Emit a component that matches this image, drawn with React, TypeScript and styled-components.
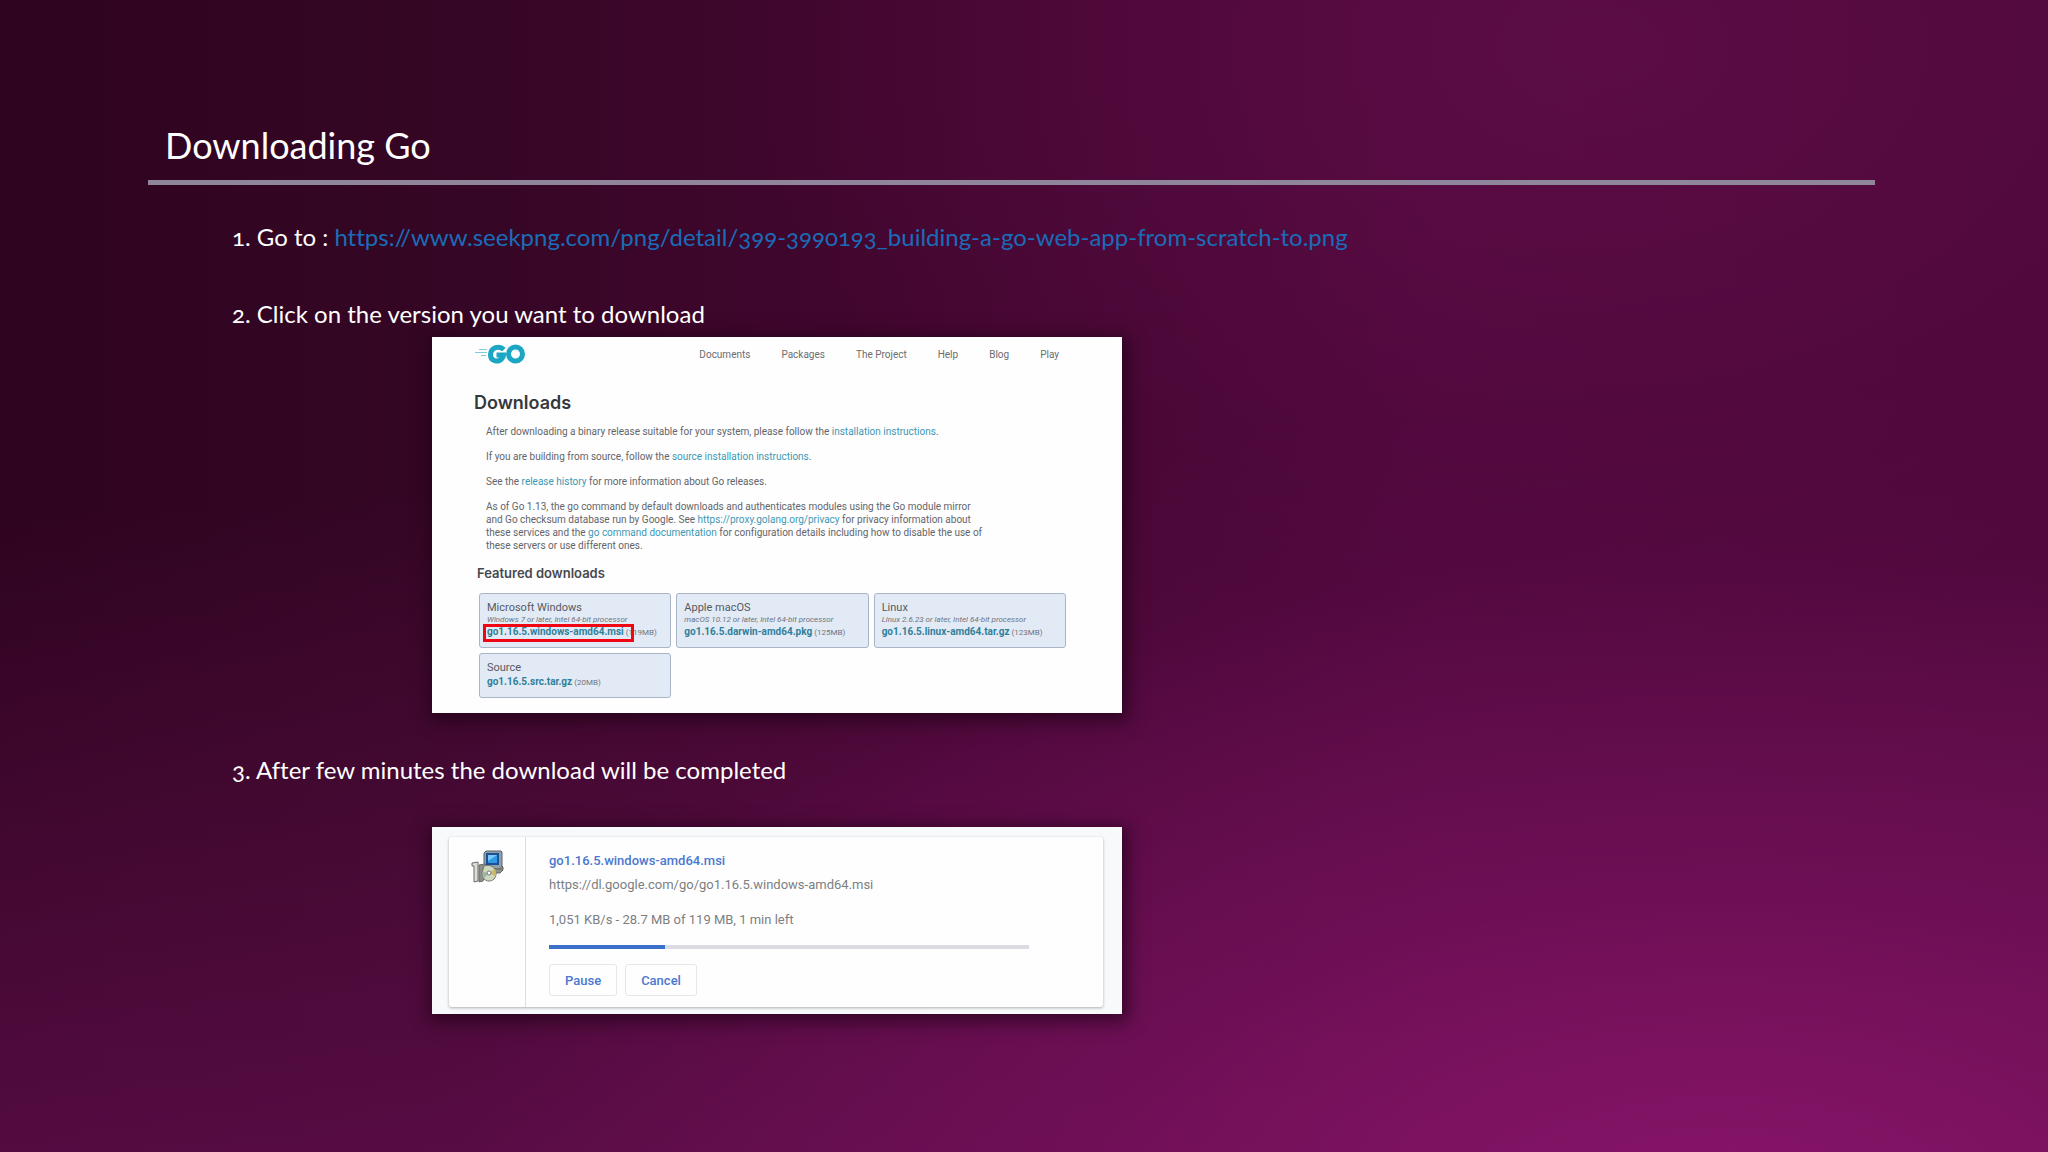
import React from "react";
import styled, { createGlobalStyle } from "styled-components";

const sans = `Lato, "Open Sans", sans-serif`;
const ui = `Roboto, "Liberation Sans", sans-serif`;

const GlobalStyle = createGlobalStyle`
  *, *::before, *::after { box-sizing: border-box; }
  body { margin: 0; background: #3c062b; }
`;

const Slide = styled.main`
  min-height: 100vh;
  padding: 120px 173px 60px 148px;
  font-family: ${sans};
  font-variant-numeric: oldstyle-nums;
  font-variant-ligatures: none;
  color: #fff;
  background:
    radial-gradient(ellipse 62% 58% at 84% 106%, rgba(146, 22, 112, 0.8) 0%, rgba(136, 20, 106, 0.4) 50%, rgba(130, 18, 100, 0) 100%),
    radial-gradient(ellipse 42% 50% at 78% 4%, rgba(104, 16, 78, 0.5) 0%, rgba(96, 12, 72, 0) 100%),
    linear-gradient(176deg, rgba(100, 14, 80, 0) 40%, rgba(108, 16, 86, 0.72) 100%),
    linear-gradient(90deg, #2f0420 0%, #340624 20%, #430630 45%, #4e083b 70%, #4c0838 100%);
`;

const Title = styled.h1`
  margin: 0;
  padding: 0 17px 10px;
  font-size: 36px;
  font-weight: 400;
  line-height: 50px;
  border-bottom: 5px solid #8f869b;
`;

const Steps = styled.ol`
  list-style: none;
  margin: 0;
  padding: 36px 0 0 84px;
`;

const Step = styled.li<{ $gap: number }>`
  margin-bottom: ${(p) => p.$gap}px;
`;

const StepText = styled.p`
  margin: 0;
  font-size: 24px;
  line-height: 32px;
`;

const StepLink = styled.a`
  color: #1a6cb8;
  text-decoration: none;
`;

const Shot = styled.section<{ $top: number }>`
  width: 690px;
  max-width: 100%;
  margin: ${(p) => p.$top}px 0 0 200px;
  font-family: ${ui};
  font-variant-numeric: normal;
  box-shadow: 2px 4px 16px 4px rgba(24, 0, 16, 0.6);
`;

const GoPage = styled(Shot)`
  padding: 5px 56px 15px 42px;
  background: #fefefe;
  color: #62656a;
`;

const GoHeader = styled.header`
  display: flex;
  align-items: center;
  justify-content: space-between;
  height: 24px;
  padding-right: 7px;
`;

const GoNav = styled.nav`
  display: flex;
  gap: 31px;
  padding-top: 2px;
`;

const NavLink = styled.a`
  font-size: 10px;
  line-height: 16px;
  color: #6b6d70;
  text-decoration: none;
`;

const GoTitle = styled.h2`
  margin: 25px 0 0;
  font-family: Inter, sans-serif;
  font-size: 18px;
  font-weight: 600;
  line-height: 24px;
  color: #36383d;
`;

const Prose = styled.div`
  padding-left: 12px;
  margin-top: 10px;
`;

const Para = styled.p`
  margin: 0 0 12px;
  font-size: 10px;
  line-height: 13px;
  white-space: nowrap;
`;

const GoLink = styled.a`
  color: #3c98b4;
  text-decoration: none;
`;

const Featured = styled.h3`
  margin: 11px 0 11px 3px;
  font-family: Inter, sans-serif;
  font-size: 13px;
  font-weight: 600;
  line-height: 18px;
  color: #46484d;
`;

const Grid = styled.div`
  display: grid;
  grid-template-columns: repeat(3, 1fr);
  gap: 5px;
  padding-left: 5px;
`;

const Download = styled.article`
  position: relative;
  padding: 7px;
  border: 1px solid #a9b4c6;
  border-radius: 3px;
  background: #e2eaf5;
  white-space: nowrap;
`;

const Os = styled.h4`
  margin: 0;
  font-size: 11px;
  font-weight: 400;
  line-height: 14px;
  color: #565a62;
`;

const Req = styled.p`
  margin: 0;
  font-size: 8px;
  font-style: italic;
  line-height: 10px;
  color: #6f747d;
`;

const FileLine = styled.p`
  margin: 0;
  font-size: 8px;
  line-height: 14px;
  color: #6f747d;
`;

const FileLink = styled.a`
  font-size: 10px;
  font-weight: 700;
  color: #30809b;
  text-decoration: none;
`;

const Marker = styled.span`
  position: absolute;
  left: 3px;
  bottom: 5px;
  width: 151px;
  height: 18px;
  border: 3px solid #f00612;
`;

const Browser = styled(Shot)`
  padding: 10px 19px 7px 17px;
  background: #f7f9fb;
`;

const DownloadItem = styled.div`
  display: flex;
  min-height: 170px;
  background: #fefefe;
  border-radius: 3px;
  box-shadow: 0 1px 3px rgba(60, 64, 67, 0.4);
`;

const IconCell = styled.div`
  flex: 0 0 77px;
  padding: 13px 0 0 22px;
  border-right: 1px solid #dcdde3;
`;

const Details = styled.div`
  flex: 1;
  padding: 14px 74px 11px 23px;
  color: #7c7e82;
  font-size: 13px;
`;

const FileName = styled.a`
  display: block;
  font-weight: 500;
  line-height: 20px;
  color: #4a78d0;
  text-decoration: none;
`;

const SourceUrl = styled.p`
  margin: 4px 0 0;
  line-height: 20px;
`;

const Status = styled.p`
  margin: 15px 0 0;
  line-height: 20px;
`;

const Track = styled.div`
  height: 4px;
  margin-top: 15px;
  background: #dadce2;
`;

const Fill = styled.div`
  height: 100%;
  background: #3a6fca;
`;

const Actions = styled.div`
  display: flex;
  gap: 8px;
  margin-top: 15px;
`;

const Action = styled.button`
  height: 32px;
  padding: 0 15px;
  border: 1px solid #e6e7ea;
  border-radius: 3px;
  background: #fefefe;
  color: #4a78d0;
  font-family: ${ui};
  font-size: 13px;
  font-weight: 500;
`;

const GoLogo = () => (
  <svg width="52" height="22" viewBox="0 0 52 22" fill="none" role="img" aria-label="Go">
    <g stroke="#7fcbdc" strokeWidth="1.2">
      <path d="M5 6.500h8M1 9.500h12M7 12.500h5" />
    </g>
    <g stroke="#1ba6c4" strokeWidth="5">
      <path d="M30 6.500C25 2 17 4.500 16.500 11.500C16 18 24 20 28 15.500C29 14.300 29.500 13 29.500 12H22.500" />
      <ellipse cx="41.500" cy="11" rx="7" ry="7" />
    </g>
  </svg>
);

const InstallerIcon = () => (
  <svg width="34" height="34" viewBox="0 0 34 34" aria-hidden="true">
    <path d="M13 3l2-2h15l1 1v14l-2 3H15l-2-2z" fill="#8fa0a8" stroke="#59636a" />
    <path d="M15 3h13v12H15z" fill="#1d4f92" />
    <path d="M17 5h9v8h-9z" fill="#2f9be8" />
    <path d="M17 5h9l-9 6z" fill="#7cc8f6" />
    <path d="M16 19h15v-3l1 1v3l-3 3h-8z" fill="#8f9185" stroke="#65675f" />
    <path d="M1 13l6-1v19l-4 1V16H1z" fill="#dcded6" stroke="#6b6d68" />
    <path d="M8 15l6-1 3 3-5 14-4 1z" fill="#8d9088" stroke="#6b6d68" />
    <path d="M13 16c6-2 12 1 12 8 0 4-3 7-7 7s-7-3-7-8z" fill="#cfd8bf" stroke="#77796f" />
    <path d="M18 23l6-4a7 7 0 0 1 0 7z" fill="#c9b968" />
    <path d="M18 23l-5 5a7 7 0 0 1-1-6z" fill="#9db5a5" />
    <circle cx="18" cy="23" r="2" fill="#fff" stroke="#77796f" />
  </svg>
);

const navItems = ["Documents", "Packages", "The Project", "Help", "Blog", "Play"];

const downloads = [
  { os: "Microsoft Windows", req: "Windows 7 or later, Intel 64-bit processor", file: "go1.16.5.windows-amd64.msi", size: "119MB", marked: true },
  { os: "Apple macOS", req: "macOS 10.12 or later, Intel 64-bit processor", file: "go1.16.5.darwin-amd64.pkg", size: "125MB" },
  { os: "Linux", req: "Linux 2.6.23 or later, Intel 64-bit processor", file: "go1.16.5.linux-amd64.tar.gz", size: "123MB" },
  { os: "Source", file: "go1.16.5.src.tar.gz", size: "20MB" },
];

const received = 28.7;
const total = 119;

export default function App() {
  return (
    <>
      <GlobalStyle />
      <Slide>
        <Title>Downloading Go</Title>
        <Steps>
          <Step $gap={45}>
            <StepText>
              1. Go to :{" "}
              <StepLink href="#source">
                https://www.seekpng.com/png/detail/399-3990193_building-a-go-web-app-from-scratch-to.png
              </StepLink>
            </StepText>
          </Step>
          <Step $gap={41}>
            <StepText>2. Click on the version you want to download</StepText>
            <GoPage $top={7}>
              <GoHeader>
                <GoLogo />
                <GoNav>
                  {navItems.map((item) => (
                    <NavLink href="#nav" key={item}>{item}</NavLink>
                  ))}
                </GoNav>
              </GoHeader>
              <GoTitle>Downloads</GoTitle>
              <Prose>
                <Para>
                  After downloading a binary release suitable for your system, please follow the{" "}
                  <GoLink href="#install">installation instructions</GoLink>.
                </Para>
                <Para>
                  If you are building from source, follow the{" "}
                  <GoLink href="#source-install">source installation instructions</GoLink>.
                </Para>
                <Para>
                  See the <GoLink href="#history">release history</GoLink> for more information about Go releases.
                </Para>
                <Para>
                  As of Go 1.13, the go command by default downloads and authenticates modules using the Go module mirror
                  <br />
                  and Go checksum database run by Google. See <GoLink href="#privacy">https://proxy.golang.org/privacy</GoLink> for privacy information about
                  <br />
                  these services and the <GoLink href="#docs">go command documentation</GoLink> for configuration details including how to disable the use of
                  <br />
                  these servers or use different ones.
                </Para>
              </Prose>
              <Featured>Featured downloads</Featured>
              <Grid>
                {downloads.map((d) => (
                  <Download key={d.os}>
                    <Os>{d.os}</Os>
                    {d.req && <Req>{d.req}</Req>}
                    <FileLine>
                      <FileLink href="#file">{d.file}</FileLink> ({d.size})
                    </FileLine>
                    {d.marked && <Marker />}
                  </Download>
                ))}
              </Grid>
            </GoPage>
          </Step>
          <Step $gap={0}>
            <StepText>3. After few minutes the download will be completed</StepText>
            <Browser $top={41}>
              <DownloadItem>
                <IconCell>
                  <InstallerIcon />
                </IconCell>
                <Details>
                  <FileName href="#file">go1.16.5.windows-amd64.msi</FileName>
                  <SourceUrl>https://dl.google.com/go/go1.16.5.windows-amd64.msi</SourceUrl>
                  <Status>1,051 KB/s - 28.7 MB of 119 MB, 1 min left</Status>
                  <Track role="progressbar" aria-label="Download progress" aria-valuemin={0} aria-valuemax={total} aria-valuenow={received}>
                    <Fill style={{ width: `${(received / total) * 100}%` }} />
                  </Track>
                  <Actions>
                    <Action type="button">Pause</Action>
                    <Action type="button">Cancel</Action>
                  </Actions>
                </Details>
              </DownloadItem>
            </Browser>
          </Step>
        </Steps>
      </Slide>
    </>
  );
}
